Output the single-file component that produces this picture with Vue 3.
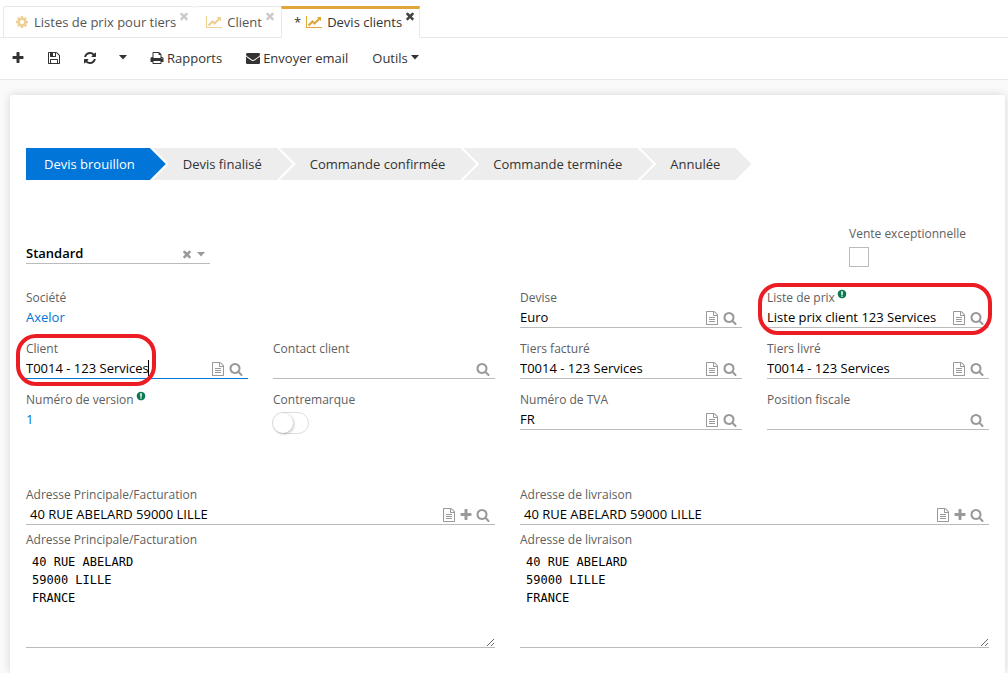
<script setup>
import { ref, h } from 'vue'

const shapes = {
  plus: ['0 0 1792 1792', 'M1600 736v192q0 40-28 68t-68 28h-416v416q0 40-28 68t-68 28h-192q-40 0-68-28t-28-68v-416h-416q-40 0-68-28t-28-68v-192q0-40 28-68t68-28h416v-416q0-40 28-68t68-28h192q40 0 68 28t28 68v416h416q40 0 68 28t28 68z'],
  times: ['0 0 1792 1792', 'M1490 1322q0 40-28 68l-136 136q-28 28-68 28t-68-28l-294-294-294 294q-28 28-68 28t-68-28l-136-136q-28-28-28-68t28-68l294-294-294-294q-28-28-28-68t28-68l136-136q28-28 68-28t68 28l294 294 294-294q28-28 68-28t68 28l136 136q28 28 28 68t-28 68l-294 294 294 294q28 28 28 68z'],
  search: ['0 0 1792 1792', 'M1216 832q0-185-131.5-316.5t-316.5-131.5-316.5 131.5-131.5 316.5 131.5 316.5 316.5 131.5 316.5-131.5 131.5-316.5zm512 832q0 52-38 90t-90 38q-54 0-90-38l-343-342q-179 124-399 124-143 0-273.5-55.5t-225-150-150-225-55.5-273.5 55.5-273.5 150-225 225-150 273.5-55.5 273.5 55.5 225 150 150 225 55.5 273.5q0 220-124 399l343 343q37 37 37 90z'],
  file: ['0 0 1792 1792', 'M1596 380q28 28 48 76t20 88v1152q0 40-28 68t-68 28h-1344q-40 0-68-28t-28-68v-1600q0-40 28-68t68-28h896q40 0 88 20t76 48zm-444-244v376h376q-10-29-22-41l-313-313q-12-12-41-22zm384 1528v-1024h-416q-40 0-68-28t-28-68v-416h-768v1536h1280zm-1024-864q0-14 9-23t23-9h704q14 0 23 9t9 23v64q0 14-9 23t-23 9h-704q-14 0-23-9t-9-23v-64zm736 224q14 0 23 9t9 23v64q0 14-9 23t-23 9h-704q-14 0-23-9t-9-23v-64q0-14 9-23t23-9h704zm0 256q14 0 23 9t9 23v64q0 14-9 23t-23 9h-704q-14 0-23-9t-9-23v-64q0-14 9-23t23-9h704z'],
  save: ['0 0 1792 1792', 'M512 1536h768v-384h-768v384zm896 0h128v-896q0-14-10-38.5t-20-34.5l-281-281q-10-10-34-20t-39-10v416q0 40-28 68t-68 28h-576q-40 0-68-28t-28-68v-416h-128v1280h128v-416q0-40 28-68t68-28h832q40 0 68 28t28 68v416zm-384-928v-320q0-13-9.5-22.5t-22.5-9.5h-192q-13 0-22.5 9.5t-9.5 22.5v320q0 13 9.5 22.5t22.5 9.5h192q13 0 22.5-9.5t9.5-22.5zm640 32v928q0 40-28 68t-68 28h-1344q-40 0-68-28t-28-68v-1344q0-40 28-68t68-28h928q40 0 88 20t76 48l280 280q28 28 48 76t20 88z'],
  refresh: ['0 0 1792 1792', 'M1639 1056q0 5-1 7-64 268-268 434.5t-478 166.5q-146 0-282.5-55t-243.5-157l-129 129q-19 19-45 19t-45-19-19-45v-448q0-26 19-45t45-19h448q26 0 45 19t19 45-19 45l-137 137q71 66 161 102t187 36q134 0 250-65t186-179q11-17 53-117 8-23 30-23h192q13 0 22.5 9.5t9.5 22.5zm25-800v448q0 26-19 45t-45 19h-448q-26 0-45-19t-19-45 19-45l138-138q-148-137-349-137-134 0-250 65t-186 179q-11 17-53 117-8 23-30 23h-199q-13 0-22.5-9.5t-9.5-22.5v-7q65-268 270-434.5t480-166.5q146 0 284 55.5t245 156.5l130-129q19-19 45-19t45 19 19 45z'],
  print: ['0 0 1792 1792', 'M448 1536h896v-256h-896v256zm0-640h896v-384h-160q-40 0-68-28t-28-68v-160h-640v640zm1152 64q0-26-19-45t-45-19-45 19-19 45 19 45 45 19 45-19 19-45zm128 0v416q0 13-9.5 22.5t-22.5 9.5h-224v160q0 40-28 68t-68 28h-960q-40 0-68-28t-28-68v-160h-224q-13 0-22.5-9.5t-9.5-22.5v-416q0-79 56.5-135.5t135.5-56.5h64v-544q0-40 28-68t68-28h672q40 0 88 20t76 48l152 152q28 28 48 76t20 88v256h64q79 0 135.5 56.5t56.5 135.5z'],
  mail: ['0 0 1792 1792', 'M1792 710v794q0 66-47 113t-113 47h-1472q-66 0-113-47t-47-113v-794q44 49 101 87 362 246 497 345 57 42 92.5 65.5t94.5 48 110 24.5h2q51 0 110-24.5t94.5-48 92.5-65.5q170-123 498-345 57-39 100-87zm0-294q0 79-49 151t-122 123q-376 261-468 325-10 7-42.5 31t-54 38.5-52 32.5-57.5 27-50 9h-2q-23 0-50-9t-57.5-27-52-32.5-54-38.5-42.5-31q-91-64-262-182.5t-205-142.5q-62-42-117-115.5t-55-136.5q0-78 41.5-130t118.5-52h1472q65 0 112.5 47t47.5 113z'],
  chart: ['0 0 2048 1792', 'M2048 1536v128h-2048v-1536h128v1408h1920zm-128-1248v435q0 21-19.5 29.5t-35.5-7.5l-121-121-633 633q-10 10-23 10t-23-10l-233-233-416 416-192-192 585-585q10-10 23-10t23 10l233 233 464-464-121-121q-16-16-7.5-35.5t29.5-19.5h435q14 0 23 9t9 23z'],
  cog: ['0 0 1792 1792', 'M1152 896q0-106-75-181t-181-75-181 75-75 181 75 181 181 75 181-75 75-181zm512-109v222q0 12-8 23t-20 13l-185 28q-19 54-39 91 35 50 107 138 10 12 10 25t-9 23q-27 37-99 108t-94 71q-12 0-26-9l-138-108q-44 23-91 38-16 136-29 186-7 28-36 28h-222q-14 0-24.5-8.5t-11.5-21.5l-28-184q-49-16-90-37l-141 107q-10 9-25 9-14 0-25-11-126-114-165-168-7-10-7-23 0-12 8-23 15-21 51-66.5t54-70.5q-27-50-41-99l-183-27q-13-2-21-12.5t-8-23.5v-222q0-12 8-23t19-13l186-28q14-46 39-92-40-57-107-138-10-12-10-24 0-10 9-23 26-36 98.5-107.5t94.5-71.5q13 0 26 10l138 107q44-23 91-38 16-136 29-186 7-28 36-28h222q14 0 24.5 8.5t11.5 21.5l28 184q49 16 90 37l142-107q9-9 24-9 13 0 25 10 129 119 165 170 7 8 7 22 0 12-8 23-15 21-51 66.5t-54 70.5q26 50 41 98l183 28q13 2 21 12.5t8 23.5z'],
  info: ['0 0 1792 1792', 'M896 128q209 0 385.5 103t279.5 279.5 103 385.5-103 385.5-279.5 279.5-385.5 103-385.5-103-279.5-279.5-103-385.5 103-385.5 279.5-279.5 385.5-103zm128 1247v-190q0-14-9-23.5t-22-9.5h-192q-13 0-23 10t-10 23v190q0 13 10 23t23 10h192q13 0 22-9.5t9-23.5zm-2-344l18-621q0-12-10-18-10-8-24-8h-220q-14 0-24 8-10 6-10 18l17 621q0 10 10 17.5t24 7.5h197q14 0 23.5-7.5t10.5-17.5z'],
  caret: ['0 0 8 5', 'M0 0h8L4 4.5z'],
}

const Icon = (props) =>
  h('svg', { viewBox: shapes[props.name][0], fill: 'currentColor', 'aria-hidden': 'true' }, [
    h('path', { d: shapes[props.name][1] }),
  ])
Icon.props = ['name']

const tabs = [
  { label: 'Listes de prix pour tiers', icon: 'cog' },
  { label: 'Client', icon: 'chart' },
  { label: 'Devis clients', icon: 'chart', active: true },
]

const steps = ['Devis brouillon', 'Devis finalisé', 'Commande confirmée', 'Commande terminée', 'Annulée']

const iconTitles = { file: 'Ouvrir', plus: 'Ajouter', search: 'Rechercher' }

const fields = ref([
  { id: 'company', label: 'Société', kind: 'link', value: 'Axelor' },
  { id: 'blank', kind: 'blank' },
  { id: 'currency', label: 'Devise', value: 'Euro', icons: ['file', 'search'] },
  { id: 'pricelist', label: 'Liste de prix', value: 'Liste prix client 123 Services', icons: ['file', 'search'], help: true, ring: 'ring-full' },
  { id: 'client', label: 'Client', value: 'T0014 - 123 Services', icons: ['file', 'search'], focus: true, ring: 'ring-short' },
  { id: 'contact', label: 'Contact client', value: '', icons: ['search'] },
  { id: 'invoiced', label: 'Tiers facturé', value: 'T0014 - 123 Services', icons: ['file', 'search'] },
  { id: 'delivered', label: 'Tiers livré', value: 'T0014 - 123 Services', icons: ['file', 'search'] },
  { id: 'version', label: 'Numéro de version', kind: 'text', value: '1', help: true },
  { id: 'contremarque', label: 'Contremarque', kind: 'toggle', value: false },
  { id: 'vat', label: 'Numéro de TVA', value: 'FR', icons: ['file', 'search'] },
  { id: 'fiscal', label: 'Position fiscale', value: '', icons: ['search'] },
])

const addresses = ref([
  { id: 'billing', label: 'Adresse Principale/Facturation', line: '40 RUE ABELARD 59000 LILLE', text: '40 RUE ABELARD\n59000 LILLE\nFRANCE' },
  { id: 'shipping', label: 'Adresse de livraison', line: '40 RUE ABELARD 59000 LILLE', text: '40 RUE ABELARD\n59000 LILLE\nFRANCE' },
])

const template = ref('Standard')
const exceptional = ref(false)
</script>

<template>
  <div class="app">
    <nav class="tabs">
      <div v-for="t in tabs" :key="t.label" class="tab" :class="{ active: t.active }">
        <button type="button" class="tab-main">
          <span v-if="t.active" class="dirty">*</span>
          <Icon :name="t.icon" class="tab-icon" :class="t.icon" />
          <span>{{ t.label }}</span>
        </button>
        <button type="button" class="tab-close" aria-label="Fermer"><Icon name="times" /></button>
      </div>
    </nav>

    <div class="toolbar">
      <button type="button" class="tool" aria-label="Nouveau"><Icon name="plus" class="i14" /></button>
      <button type="button" class="tool" aria-label="Enregistrer"><Icon name="save" class="i14" /></button>
      <button type="button" class="tool" aria-label="Rafraîchir"><Icon name="refresh" class="i14" /></button>
      <button type="button" class="tool" aria-label="Plus"><Icon name="caret" class="caret" /></button>
      <button type="button" class="tool"><Icon name="print" class="i14" />Rapports</button>
      <button type="button" class="tool"><Icon name="mail" class="i14" />Envoyer email</button>
      <button type="button" class="tool">Outils<Icon name="caret" class="caret" /></button>
    </div>

    <main class="panel">
      <ol class="steps">
        <li v-for="(s, i) in steps" :key="s" class="step" :class="{ current: i === 0 }">{{ s }}</li>
      </ol>

      <div class="head">
        <div class="box select">
          <input v-model="template" type="text" aria-label="Modèle" />
          <button type="button" aria-label="Effacer"><Icon name="times" class="i12" /></button>
          <button type="button" aria-label="Dérouler"><Icon name="caret" class="caret" /></button>
        </div>
        <div class="exceptional">
          <label class="label" for="exceptional">Vente exceptionnelle</label>
          <input id="exceptional" v-model="exceptional" class="check" type="checkbox" />
        </div>
      </div>

      <div class="grid">
        <div v-for="f in fields" :key="f.id" class="field">
          <template v-if="f.kind !== 'blank'">
            <label v-if="f.kind !== 'link' && f.kind !== 'text'" class="label" :for="f.id">{{ f.label }}<Icon v-if="f.help" name="info" class="help" /></label>
            <span v-else class="label">{{ f.label }}<Icon v-if="f.help" name="info" class="help" /></span>
            <a v-if="f.kind === 'link'" class="value" href="#">{{ f.value }}</a>
            <span v-else-if="f.kind === 'text'" class="value">{{ f.value }}</span>
            <input v-else-if="f.kind === 'toggle'" :id="f.id" v-model="f.value" class="toggle" type="checkbox" role="switch" />
            <div v-else class="box" :class="{ focus: f.focus }">
              <input :id="f.id" v-model="f.value" type="text" />
              <button v-for="ic in f.icons" :key="ic" type="button" :aria-label="iconTitles[ic]"><Icon :name="ic" class="i14" /></button>
              <i v-if="f.focus" class="cursor"></i>
            </div>
            <i v-if="f.ring" class="ring" :class="f.ring"></i>
          </template>
        </div>
      </div>

      <div class="addresses">
        <div v-for="a in addresses" :key="a.id" class="address">
          <label class="label" :for="a.id">{{ a.label }}</label>
          <div class="box indent">
            <input :id="a.id" v-model="a.line" type="text" />
            <button v-for="ic in ['file', 'plus', 'search']" :key="ic" type="button" :aria-label="iconTitles[ic]"><Icon :name="ic" class="i14" /></button>
          </div>
          <label class="label second" :for="a.id + '-text'">{{ a.label }}</label>
          <textarea :id="a.id + '-text'" v-model="a.text" spellcheck="false"></textarea>
        </div>
      </div>
    </main>
  </div>
</template>

<style>
body {
  background: #fafafa;
  overflow: hidden;
}
</style>

<style scoped>
.app {
  display: flex;
  flex-direction: column;
  min-height: 100vh;
  font: 13px/18px "Open Sans", sans-serif;
  color: #333;
}
.app * {
  box-sizing: border-box;
}
button {
  display: flex;
  align-items: center;
  padding: 0;
  border: 0;
  background: none;
  font: inherit;
  color: inherit;
}
svg {
  display: block;
  flex: none;
}
.i14 {
  width: 14px;
  height: 14px;
}
.i12 {
  width: 12px;
  height: 12px;
}
.caret {
  width: 8px;
  height: 5px;
}

.tabs {
  display: flex;
  padding: 6px 0 0 3px;
  background: #fff;
  border-bottom: 1px solid #e8e8e8;
}
.tab {
  display: flex;
  height: 32px;
  margin-bottom: -1px;
  padding: 0 5px 0 11px;
  border-top: 1px solid #e8e8e8;
  border-bottom: 1px solid #e8e8e8;
  border-radius: 3px 3px 0 0;
}
.tab:first-child {
  border-left: 1px solid #e8e8e8;
}
.tab-main {
  gap: 5px;
  color: #555;
}
.tab-icon {
  height: 14px;
  color: #efcf92;
}
.tab-icon.cog {
  width: 14px;
}
.tab-icon.chart {
  width: 16px;
}
.tab-close {
  align-self: flex-start;
  margin: 3px 0 0 2px;
  color: #ccc;
}
.tab-close svg {
  width: 12px;
  height: 12px;
}
.tab.active {
  padding: 0 3px 0 12px;
  border-top: 3px solid #dfa739;
  border-right: 1px solid #e8e8e8;
  border-left: 1px solid #e8e8e8;
  border-bottom-color: #fff;
  border-radius: 0;
}
.active .tab-main {
  color: #333;
  margin-top: -2px;
}
.active .tab-icon {
  color: #dfa739;
}
.active .tab-close {
  margin-top: 1px;
  color: #444;
}

.toolbar {
  display: flex;
  align-items: center;
  gap: 23px;
  height: 42px;
  padding: 0 11px 2px;
  background: #fff;
  border-bottom: 1px solid #e8e8e8;
}
.tool {
  gap: 3px;
}
.tool:nth-child(-n + 3) {
  margin-right: -1px;
}
.tool:nth-child(n + 6) {
  margin-left: 1px;
}

.panel {
  flex: 1;
  margin: 15px 3px 0 10px;
  padding: 53px 16px 25px;
  background: #fff;
  border-radius: 3px 3px 0 0;
  box-shadow: 0 0 10px rgba(0, 0, 0, 0.15);
}

.steps {
  display: flex;
  margin: 0;
  padding: 0;
  list-style: none;
}
.step {
  height: 32px;
  margin-left: -13px;
  padding: 0 31px 0 30px;
  line-height: 32px;
  white-space: nowrap;
  background: #ededed;
  clip-path: polygon(0 0, calc(100% - 16px) 0, 100% 50%, calc(100% - 16px) 100%, 0 100%, 16px 50%);
}
.step.current {
  margin-left: 0;
  padding-left: 18px;
  color: #fff;
  background: #0275d8;
  clip-path: polygon(0 0, calc(100% - 16px) 0, 100% 50%, calc(100% - 16px) 100%, 0 100%);
}

.head {
  display: flex;
  justify-content: space-between;
  align-items: flex-end;
  margin-top: 45px;
}
.select {
  width: 184px;
  margin-bottom: 3px;
}
.box.select input {
  font-weight: 600;
}
.exceptional {
  width: 140px;
}
.check {
  display: block;
  appearance: none;
  width: 20px;
  height: 20px;
  margin: 4px 0 0;
  border: 1px solid #bbb;
}

.label {
  display: flex;
  color: #606060;
  font-size: 12px;
  white-space: nowrap;
}
.help {
  width: 10px;
  height: 10px;
  margin-left: 2px;
  color: #0b7a50;
}
.box {
  position: relative;
  display: flex;
  align-items: center;
  gap: 4px;
  height: 21px;
  padding-right: 5px;
  border-bottom: 1px solid #bbb;
  color: #999;
}
.box input {
  flex: 1;
  min-width: 0;
  height: 20px;
  padding: 0;
  border: 0;
  outline: 0;
  background: none;
  font: inherit;
  color: #000;
}
.box button {
  padding-top: 2px;
}
.box.focus {
  border-color: #0275d8;
}
.box.indent {
  gap: 3px;
}
.box.indent input {
  padding-left: 4px;
}
.cursor {
  position: absolute;
  left: 122px;
  top: 2px;
  width: 1px;
  height: 16px;
  background: #000;
}
.value {
  display: block;
  line-height: 20px;
  color: #0275d8;
  text-decoration: none;
}

.grid {
  display: grid;
  grid-template-columns: repeat(4, 1fr);
  grid-auto-rows: 39px;
  gap: 12px 25px;
  margin-top: 22px;
}
.field {
  position: relative;
}
.toggle {
  display: block;
  appearance: none;
  width: 37px;
  height: 22px;
  margin: 3px 0 0 -1px;
  border: 1px solid #ddd;
  border-radius: 11px;
}
.toggle::before {
  content: "";
  display: block;
  width: 20px;
  height: 20px;
  border-radius: 50%;
  background: #fff;
  box-shadow: 1px 1px 3px rgba(0, 0, 0, 0.25);
}
.ring {
  position: absolute;
  top: -6px;
  height: 52px;
  border: 4px solid #ec1c24;
  border-radius: 20px;
  pointer-events: none;
}
.ring-short {
  left: -10px;
  width: 140px;
}
.ring-full {
  left: -9px;
  right: -3px;
}

.addresses {
  display: grid;
  grid-template-columns: 1fr 1fr;
  gap: 25px;
  margin-top: 56px;
}
.second {
  margin-top: 6px;
}
textarea {
  display: block;
  width: 100%;
  height: 99px;
  padding: 4px 6px;
  border: 0;
  border-bottom: 1px solid #bbb;
  outline: 0;
  background: none;
  font: 12px/18px "DejaVu Sans Mono", monospace;
  color: #000;
  resize: vertical;
}
</style>
